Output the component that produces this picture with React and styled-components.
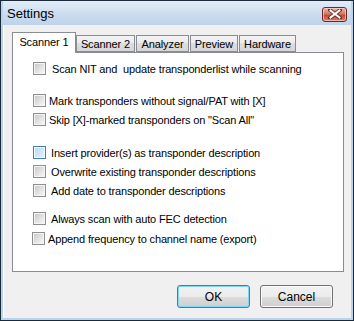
import React from "react";
import styled, { createGlobalStyle } from "styled-components";

const GlobalStyle = createGlobalStyle`
  html, body { margin: 0; padding: 0; background: #ffffff; }
  body { font-family: "Liberation Sans", Arial, sans-serif; }
`;

const tabs = [
  { label: "Scanner 1", width: 64, active: true },
  { label: "Scanner 2", width: 59 },
  { label: "Analyzer", width: 53 },
  { label: "Preview", width: 48 },
  { label: "Hardware", width: 57 },
];

const options = [
  { label: "Scan NIT and  update transponderlist while scanning", shift: 6, gap: 0 },
  { label: "Mark transponders without signal/PAT with [X]", shift: 3, gap: 13 },
  { label: "Skip [X]-marked transponders on \"Scan All\"", shift: 3, gap: 0 },
  { label: "Insert provider(s) as transponder description", shift: 5, gap: 14, hot: true },
  { label: "Overwrite existing transponder descriptions", shift: 5, gap: 0 },
  { label: "Add date to transponder descriptions", shift: 5, gap: 0 },
  { label: "Always scan with auto FEC detection", shift: 5, gap: 9 },
  { label: "Append frequency to channel name (export)", shift: 3, gap: 1, pull: 1 },
];

const CloseIcon = () => (
  <svg width="14" height="10" viewBox="0 0 14 10">
    <path d="M2 1 L12 9 M12 1 L2 9" stroke="#5a2a24" strokeWidth="3.6" strokeLinecap="square" />
    <path d="M2.5 1.5 L11.5 8.5 M11.5 1.5 L2.5 8.5" stroke="#ffffff" strokeWidth="2" strokeLinecap="square" />
  </svg>
);

export default function App() {
  return (
    <>
      <GlobalStyle />
      <Window>
        <TitleBar>
          <Title>Settings</Title>
          <CloseButton><CloseIcon /></CloseButton>
        </TitleBar>
        <Body>
          <TabStrip>
            {tabs.map((t) => (
              <Tab key={t.label} $active={t.active} $width={t.width}>{t.label}</Tab>
            ))}
          </TabStrip>
          <Panel>
            {options.map((o) => (
              <Row key={o.label} $gap={o.gap} $pull={o.pull}>
                <Check $hot={o.hot} />
                <Label $shift={o.shift}>{o.label}</Label>
              </Row>
            ))}
          </Panel>
          <ButtonRow>
            <Button $default>OK</Button>
            <Button>Cancel</Button>
          </ButtonRow>
        </Body>
      </Window>
    </>
  );
}

const Window = styled.div`
  width: 354px;
  height: 321px;
  box-sizing: border-box;
  border: 1px solid #1b2a3a;
  background: #bcd3ec;
  display: flex;
  flex-direction: column;
  padding: 0 2px 2px 2px;
`;

const TitleBar = styled.div`
  height: 24px;
  display: flex;
  align-items: center;
  justify-content: space-between;
  padding: 0 4px 0 4px;
  background: linear-gradient(#e4edf7, #c9dbee 60%, #bfd3ea);
`;

const Title = styled.div`
  font-family: "Liberation Sans", Arial, sans-serif;
  font-size: 13px;
  color: #000;
  margin-top: 1px;
`;

const CloseButton = styled.div`
  width: 25px;
  height: 15px;
  margin-top: 2px;
  box-sizing: border-box;
  border: 1px solid #6e2a22;
  border-radius: 3px;
  background: linear-gradient(#e6b3a8, #d27a6a 45%, #c14a38 55%, #d7806a);
  box-shadow: inset 0 0 0 1px rgba(255, 220, 210, 0.6);
  display: flex;
  align-items: center;
  justify-content: center;
`;

const Body = styled.div`
  flex: 1;
  background: #f0f0f0;
  display: flex;
  flex-direction: column;
  padding: 6px 8px 0 8px;
  border-left: 1px solid #ffffff;
`;

const TabStrip = styled.div`
  display: flex;
  align-items: flex-end;
  height: 21px;
  position: relative;
  z-index: 1;
`;

const Tab = styled.div`
  width: ${(p) => p.$width}px;
  box-sizing: border-box;
  height: ${(p) => (p.$active ? 21 : 17)}px;
  margin-bottom: ${(p) => (p.$active ? -1 : 0)}px;
  margin-right: ${(p) => (p.$active ? 0 : 1)}px;
  border: 1px solid #898c95;
  border-bottom: ${(p) => (p.$active ? "none" : "1px solid #898c95")};
  background: ${(p) => (p.$active ? "#ffffff" : "linear-gradient(#f3f3f3, #ebebeb 50%, #dedede 50%, #d6d6d6)")};
  font-size: 11px;
  letter-spacing: -0.1px;
  color: #000;
  display: flex;
  align-items: center;
  justify-content: center;
  padding-bottom: ${(p) => (p.$active ? 3 : 0)}px;
`;

const Panel = styled.div`
  width: 332px;
  height: 220px;
  box-sizing: border-box;
  border: 1px solid #898c95;
  background: #ffffff;
  padding: 6px 0 0 20px;
`;

const Row = styled.div`
  display: flex;
  align-items: center;
  height: 19px;
  margin-top: ${(p) => p.$gap}px;
  margin-left: ${(p) => -(p.$pull || 0)}px;
`;

const Check = styled.div`
  width: 13px;
  height: 13px;
  box-sizing: border-box;
  border: 1px solid ${(p) => (p.$hot ? "#3c7fb1" : "#8e8f8f")};
  background: ${(p) => (p.$hot ? "#ffffff" : "#f4f4f4")};
  padding: 1px;
  display: flex;
  &::after {
    content: "";
    flex: 1;
    background: ${(p) => (p.$hot ? "linear-gradient(135deg, #b9dcf6, #e0f0fb)" : "linear-gradient(135deg, #cbcbcb, #f6f6f6)")};
  }
`;

const Label = styled.div`
  margin-left: ${(p) => p.$shift}px;
  font-size: 11px;
  letter-spacing: -0.15px;
  color: #000;
  white-space: pre;
`;

const ButtonRow = styled.div`
  display: flex;
  justify-content: flex-end;
  gap: 10px;
  padding: 13px 10px 0 0;
`;

const Button = styled.div`
  width: 73px;
  height: 23px;
  box-sizing: border-box;
  border: 1px solid ${(p) => (p.$default ? "#3c7fb1" : "#707070")};
  border-radius: 3px;
  background: linear-gradient(#f2f2f2, #ebebeb 50%, #dddddd 50%, #cfcfcf);
  box-shadow: inset 0 0 0 1px ${(p) => (p.$default ? "#7fd6f8" : "#fbfbfb")};
  font-size: 12px;
  color: #000;
  display: flex;
  align-items: center;
  justify-content: center;
`;
